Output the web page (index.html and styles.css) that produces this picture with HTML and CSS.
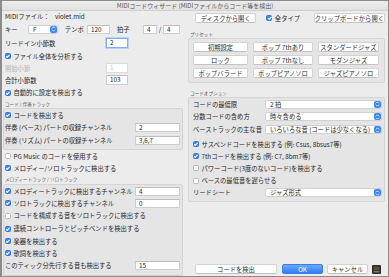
FILE: index.html
```html
<!DOCTYPE html>
<html lang="ja">
<head>
    <meta charset="UTF-8">
    <title>MIDIコードウィザード</title>
    <link rel="stylesheet" href="styles.css">
</head>
<body>
<div class="win">
    <div class="titlebar">MIDIコードウィザード (MIDIファイルからコード等を検出)</div>

    <div class="win-body">
        <!-- left -->
        <div class="col-left">
            <div class="row h11 pad">
                <span class="lbl-file">MIDIファイル：</span><span>violet.mid</span>
            </div>
            <div class="row h14 pad">
                <span class="lbl-key">キー</span>
                <span class="select sel-key"><span class="sel-text">F</span><span class="stepper"><svg width="7" height="8" viewBox="0 0 7 8"><path d="M2 3.3 L3.5 1.8 L5 3.3 M2 4.7 L3.5 6.2 L5 4.7" stroke="#fff" stroke-width=".8" fill="none"/></svg></span></span>
                <span class="lbl-tempo">テンポ</span>
                <span class="input in-tempo">120</span>
                <span class="lbl-beat">拍子</span>
                <span class="input in-beat1">4</span>
                <span class="slash">/</span>
                <span class="input in-beat2">4</span>
            </div>
            <div class="row h14 pad">
                <span class="lbl-top">リードイン小節数</span>
                <span class="input in-small focus">2</span>
            </div>
            <div class="row h12 pad">
                <span class="cb on"></span><span>ファイル全体を分析する</span>
            </div>
            <div class="row h12 pad dis">
                <span class="lbl-top">開始小節</span>
                <span class="input in-small">1</span>
            </div>
            <div class="row h12 pad">
                <span class="lbl-top">合計小節数</span>
                <span class="input in-small">103</span>
            </div>
            <div class="row h13 pad">
                <span class="cb on"></span><span>自動的に設定を検出する</span>
            </div>
            <div class="cap h9">コード / 伴奏トラック</div>
            <div class="group grp-chord">
                <div class="row h12">
                    <span class="cb on"></span><span>コードを検出する</span>
                </div>
                <div class="row h13">
                    <span>伴奏 (ベース) パートの収録チャンネル</span>
                    <span class="input in-ch">2</span>
                </div>
                <div class="row h13">
                    <span>伴奏 (リズム) パートの収録チャンネル</span>
                    <span class="input in-ch">3,6,7</span>
                </div>
            </div>
            <div class="row h12 pad">
                <span class="cb"></span><span>PG Music のコードを使用する</span>
            </div>
            <div class="row h12 pad">
                <span class="cb on"></span><span>メロディー/ソロトラックに検出する</span>
            </div>
            <div class="cap h10">メロディートラック / ソロトラック</div>
            <div class="group grp-melody">
                <div class="row h12">
                    <span class="cb on"></span><span>メロディートラックに検出するチャンネル</span>
                    <span class="input in-ch">4</span>
                </div>
                <div class="row h12">
                    <span class="cb on"></span><span>ソロトラックに検出するチャンネル</span>
                    <span class="input in-ch">0</span>
                </div>
                <div class="row h13">
                    <span class="cb"></span><span>コードを構成する音をソロトラックに検出する</span>
                </div>
                <div class="row h13">
                    <span class="cb on"></span><span>連続コントローラとピッチベンドを検出する</span>
                </div>
                <div class="row h12">
                    <span class="cb on"></span><span>楽器を検出する</span>
                </div>
                <div class="row h12">
                    <span class="cb on"></span><span>歌詞を検出する</span>
                </div>
                <div class="row h12">
                    <span>このティック分先行する音も検出する</span>
                    <span class="input in-ch">15</span>
                </div>
            </div>
        </div>

        <!-- right -->
        <div class="col-right">
            <div class="row h14 top-btns">
                <span class="btn btn-disk">ディスクから開く</span>
                <span class="cb on"></span><span class="all-type">全タイプ</span>
                <span class="btn btn-clip">クリップボードから開く</span>
            </div>
            <div class="cap cap-preset">プリセット</div>
            <div class="group grp-preset">
                <span class="btn">初期設定</span>
                <span class="btn">ポップ 7thあり</span>
                <span class="btn">スタンダードジャズ</span>
                <span class="btn">ロック</span>
                <span class="btn">ポップ 7thなし</span>
                <span class="btn">モダンジャズ</span>
                <span class="btn">ポップバラード</span>
                <span class="btn">ポップピアノソロ</span>
                <span class="btn">ジャズピアノソロ</span>
            </div>
            <div class="cap cap-opt">コードオプション</div>
            <div class="group grp-opt">
                <div class="row h12">
                    <span>コードの最低限</span>
                    <span class="select sel-opt"><span class="sel-text">2 拍</span><span class="stepper"><svg width="7" height="8" viewBox="0 0 7 8"><path d="M2 3.3 L3.5 1.8 L5 3.3 M2 4.7 L3.5 6.2 L5 4.7" stroke="#fff" stroke-width=".8" fill="none"/></svg></span></span>
                </div>
                <div class="row h13">
                    <span>分数コードの含め方</span>
                    <span class="select sel-opt"><span class="sel-text">時々含める</span><span class="stepper"><svg width="7" height="8" viewBox="0 0 7 8"><path d="M2 3.3 L3.5 1.8 L5 3.3 M2 4.7 L3.5 6.2 L5 4.7" stroke="#fff" stroke-width=".8" fill="none"/></svg></span></span>
                </div>
                <div class="row h13">
                    <span>ベーストラックの主な音</span>
                    <span class="select sel-opt"><span class="sel-text">いろいろな音 (コードは少なくなる)</span><span class="stepper"><svg width="7" height="8" viewBox="0 0 7 8"><path d="M2 3.3 L3.5 1.8 L5 3.3 M2 4.7 L3.5 6.2 L5 4.7" stroke="#fff" stroke-width=".8" fill="none"/></svg></span></span>
                </div>
                <div class="row h12 gap-top">
                    <span class="cb on"></span><span>サスペンドコードを検出する (例: Csus, 8bsus7等)</span>
                </div>
                <div class="row h12">
                    <span class="cb on"></span><span>7thコードを検出する (例: C7, 8bm7等)</span>
                </div>
                <div class="row h12">
                    <span class="cb"></span><span>パワーコード(3度のないコード)を検出する</span>
                </div>
                <div class="row h13">
                    <span class="cb"></span><span>ベースの最低音を遅らせる</span>
                </div>
                <div class="row h11">
                    <span>リードシート</span>
                    <span class="select sel-opt"><span class="sel-text">ジャズ形式</span><span class="stepper"><svg width="7" height="8" viewBox="0 0 7 8"><path d="M2 3.3 L3.5 1.8 L5 3.3 M2 4.7 L3.5 6.2 L5 4.7" stroke="#fff" stroke-width=".8" fill="none"/></svg></span></span>
                </div>
            </div>

            <div class="row h14 bottom-btns">
                <span class="btn btn-detect">コードを検出</span>
                <span class="btn btn-ok">OK</span>
                <span class="btn btn-cancel">キャンセル</span>
                <span class="help-ico"><svg width="9" height="9" viewBox="0 0 9 9"><rect width="9" height="9" rx="1" fill="#2c2c2c"/><rect x="1.5" y="1.5" width="6" height="4" fill="#5a4a36"/><rect x="1.5" y="6" width="6" height="1.5" fill="#777"/></svg></span>
            </div>
        </div>
    </div>
</div>
</body>
</html>
```

FILE: styles.css
```css
body, div, span{
    margin: 0; padding: 0;
    box-sizing: border-box;
}
body{
    width: 389px;
    height: 277px;
    overflow: hidden;
    background: #9a9a9a;
    font-family: "Noto Sans CJK JP", "Liberation Sans", sans-serif;
    font-size: 6.3px;
    color: #262626;
}

.win{
    width: 389px;
    height: 277px;
    border: 1px solid #8c8c8c;
    border-left-width: 2px;
    background: #ececec;
    display: flex;
    flex-direction: column;
}
.titlebar{
    height: 10px;
    line-height: 10px;
    text-align: center;
    font-size: 6px;
    color: #555;
    background: linear-gradient(#ececec, #e2e2e2);
    border-bottom: 1px solid #d0d0d0;
}
.win-body{
    flex: 1;
    display: flex;
    gap: 5px;
    padding: 0 3px 0 1px;
}

/* rows */
.row{
    display: flex;
    align-items: center;
    white-space: nowrap;
}
.pad{ padding-left: 2px; }
.h9{ height: 9px; }
.h10{ height: 10px; }
.h11{ height: 11px; }
.h12{ height: 12px; }
.h13{ height: 13px; }
.h14{ height: 14px; }
.dis{ color: #b4b4b4; }

.cap{
    font-size: 4.6px;
    color: #5a5a5a;
    padding-left: 2px;
    display: flex;
    align-items: center;
}

/* left */
.col-left{
    width: 180px;
    display: flex;
    flex-direction: column;
}
.lbl-file{ width: 50px; }
.lbl-key{ width: 23px; }
.lbl-tempo{ margin-left: 7px; width: 22px; }
.lbl-beat{ margin-left: 7px; width: 26px; }
.slash{ width: 6px; text-align: center; }
.lbl-top{ width: 101px; }

.input{
    height: 9px;
    line-height: 8px;
    background: #fff;
    border: 1px solid #cdcdcd;
    border-top-color: #bdbdbd;
    padding-left: 3px;
    font-size: 6.3px;
    color: #222;
}
.in-tempo{ width: 23px; }
.in-beat1{ width: 14px; }
.in-beat2{ width: 17px; }
.in-small{ width: 22px; height: 10px; }
.dis .input{ color: #c4c4c4; border-color: #dadada; }
.focus{ border: 1px solid #7fb0f5; box-shadow: 0 0 0 1px #b5d2fa; }
.in-ch{ width: 45px; margin-left: auto; margin-right: 2px; }

.select{
    display: flex;
    align-items: center;
    height: 9px;
    background: #fff;
    border: 1px solid #d0d0d0;
    border-radius: 2px;
    padding-left: 4px;
}
.sel-text{ flex: 1; }
.stepper{
    width: 7px;
    height: 7px;
    margin-right: 0;
    background: #3a87f7;
    border-radius: 2px;
    display: flex;
}
.stepper svg{ display: block; margin-top: -0.5px; }
.sel-key{ width: 30px; }
.sel-opt{ width: 117px; margin-left: auto; }

.cb{
    position: relative;
    display: inline-block;
    flex: none;
    width: 6px;
    height: 6px;
    margin-right: 2.5px;
    background: #fff;
    border: 1px solid #b8b8b8;
    border-radius: 1.5px;
}
.cb.on{
    background: #3a87f7;
    border-color: #2f78e6;
}
.cb.on:after{
    content: '';
    position: absolute;
    left: 1.2px;
    top: 0;
    width: 1.3px;
    height: 2.6px;
    border: solid #fff;
    border-width: 0 1px 1px 0;
    transform: rotate(45deg);
}

.group{
    background: #e5e5e5;
    border: 1px solid #d4d4d4;
    border-radius: 2px;
}
.grp-chord{
    padding: 0 0 2px 1px;
}
.grp-melody{
    padding: 0 0 1px 1px;
    flex: 1;
}

/* right */
.col-right{
    width: 197px;
    display: flex;
    flex-direction: column;
}
.btn{
    display: flex;
    align-items: center;
    justify-content: center;
    height: 10px;
    background: #fff;
    border: 1px solid #d2d2d2;
    border-bottom-color: #c2c2c2;
    border-radius: 2px;
    font-size: 6.3px;
    color: #2b2b2b;
}
.top-btns{ padding-left: 7px; }
.btn-disk{ width: 63px; margin-right: 10px; }
.all-type{ width: 40px; }
.btn-clip{ width: 73px; }

.cap-preset{ height: 8px; margin-top: 5px; }
.grp-preset{
    display: grid;
    grid-template-columns: 55px 60px 61px;
    grid-auto-rows: 10px;
    column-gap: 5px;
    row-gap: 3px;
    padding: 3px 4px 4px 4px;
}
.cap-opt{ height: 8px; margin-top: 6px; }
.grp-opt{
    padding: 0 2px 3px 4px;
}
.gap-top{ margin-top: 2px; }

.bottom-btns{
    margin-top: auto;
    padding-left: 7px;
    gap: 4px;
}
.btn-detect{ width: 82px; margin-right: 1px; }
.btn-ok{
    width: 41px;
    color: #fff;
    border-color: #3a7ee8;
    background: linear-gradient(#6aaafc, #2f7ef5);
}
.btn-cancel{ width: 41px; }
.help-ico{ width: 9px; height: 9px; display: flex; }
```
